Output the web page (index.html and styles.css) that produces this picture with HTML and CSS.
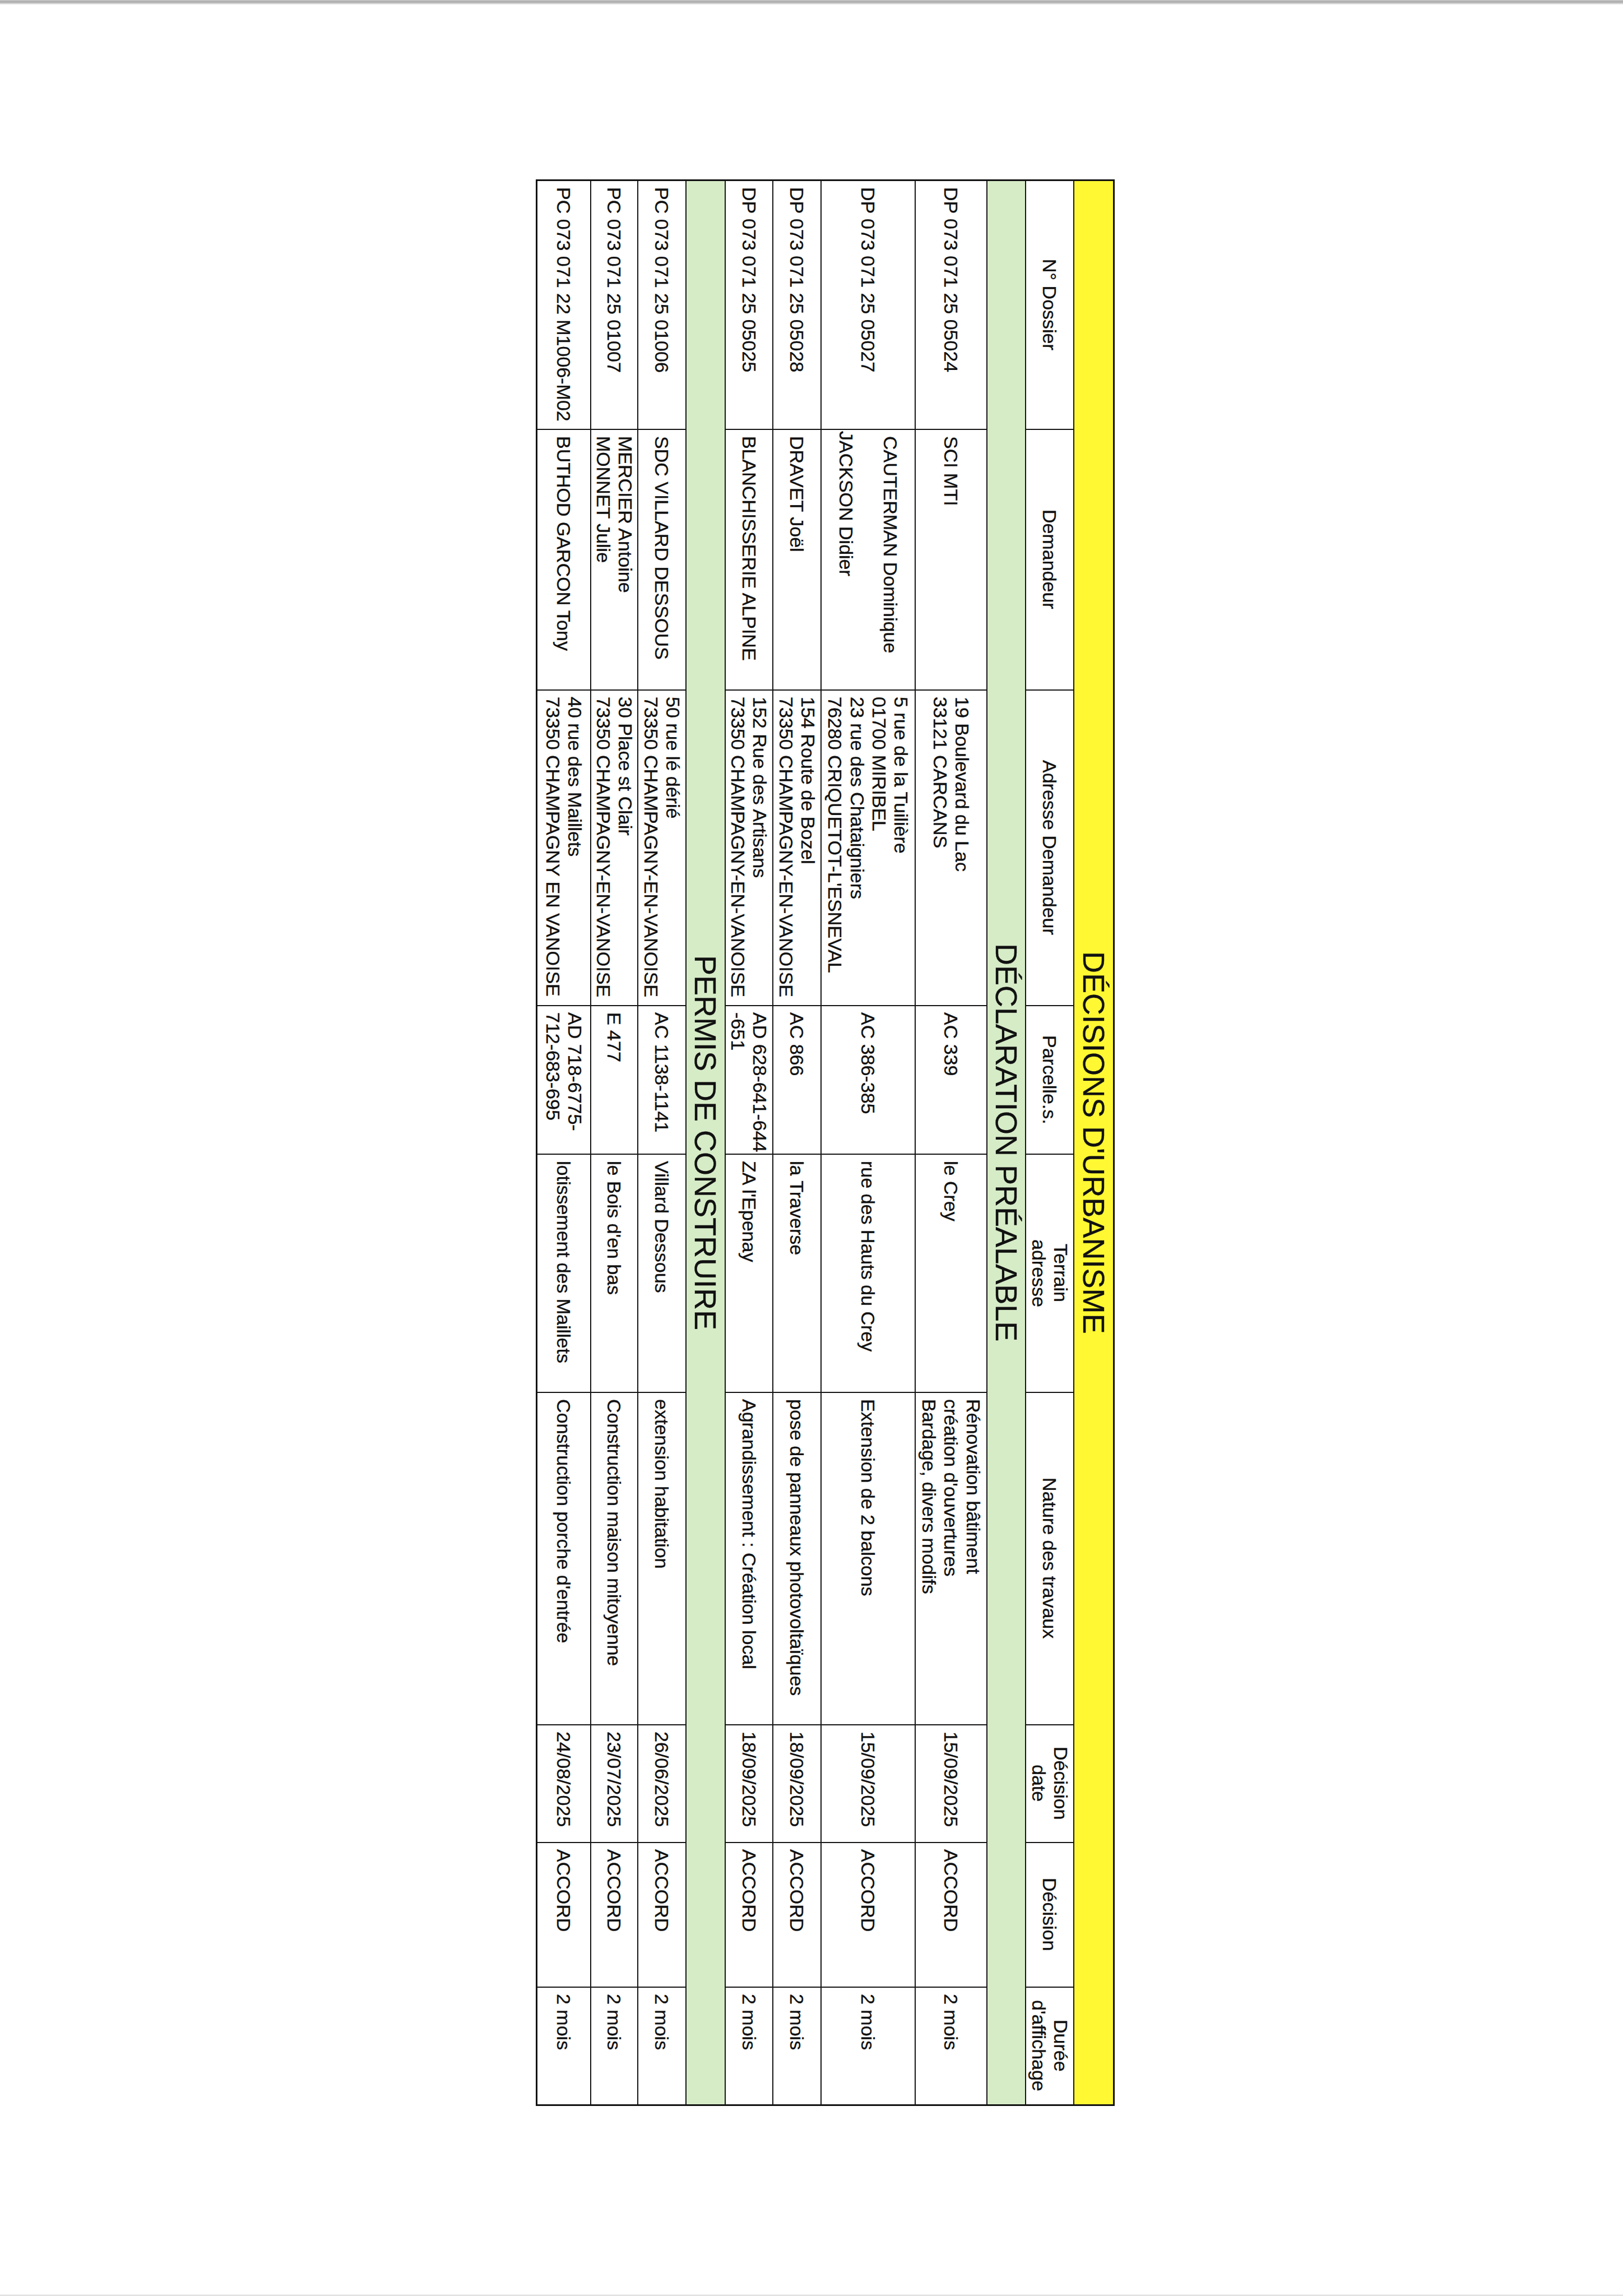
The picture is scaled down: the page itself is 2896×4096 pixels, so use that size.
FILE: index.html
```html
<!DOCTYPE html>
<html lang="fr">
<head>
<meta charset="utf-8">
<title>Décisions d'urbanisme</title>
<link rel="stylesheet" href="styles.css">
</head>
<body>
<div class="page">
  <div class="scan-top"></div>
  <div class="sheet">
    <table class="decisions">
      <colgroup>
        <col class="c-dossier">
        <col class="c-demandeur">
        <col class="c-adresse">
        <col class="c-parcelle">
        <col class="c-terrain">
        <col class="c-nature">
        <col class="c-date">
        <col class="c-decision">
        <col class="c-duree">
      </colgroup>
      <tbody>
        <tr class="r-title"><td colspan="9" class="title">DÉCISIONS D'URBANISME</td></tr>
        <tr class="r-head">
          <th>N° Dossier</th>
          <th>Demandeur</th>
          <th>Adresse Demandeur</th>
          <th>Parcelle.s.</th>
          <th>Terrain<br>adresse</th>
          <th>Nature des travaux</th>
          <th>Décision<br>date</th>
          <th>Décision</th>
          <th>Durée<br>d'affichage</th>
        </tr>
        <tr class="r-section"><td colspan="9" class="section">DÉCLARATION PRÉALABLE</td></tr>
        <tr class="r-1">
          <td>DP 073 071 25 05024</td>
          <td>SCI MTI</td>
          <td>19 Boulevard du Lac<br>33121 CARCANS</td>
          <td>AC 339</td>
          <td>le Crey</td>
          <td>Rénovation bâtiment<br>création d'ouvertures<br>Bardage, divers modifs</td>
          <td>15/09/2025</td>
          <td>ACCORD</td>
          <td>2 mois</td>
        </tr>
        <tr class="r-2">
          <td>DP 073 071 25 05027</td>
          <td>CAUTERMAN Dominique<br><br><span class="out">JACKSON Didier</span></td>
          <td>5 rue de la Tuilière<br>01700 MIRIBEL<br>23 rue des Chataigniers<br>76280 CRIQUETOT-L'ESNEVAL</td>
          <td>AC 386-385</td>
          <td>rue des Hauts du Crey</td>
          <td>Extension de 2 balcons</td>
          <td>15/09/2025</td>
          <td>ACCORD</td>
          <td>2 mois</td>
        </tr>
        <tr class="r-3">
          <td>DP 073 071 25 05028</td>
          <td>DRAVET Joël</td>
          <td>154 Route de Bozel<br>73350 CHAMPAGNY-EN-VANOISE</td>
          <td>AC 866</td>
          <td>la Traverse</td>
          <td>pose de panneaux photovoltaïques</td>
          <td>18/09/2025</td>
          <td>ACCORD</td>
          <td>2 mois</td>
        </tr>
        <tr class="r-4">
          <td>DP 073 071 25 05025</td>
          <td>BLANCHISSERIE ALPINE</td>
          <td>152 Rue des Artisans<br>73350 CHAMPAGNY-EN-VANOISE</td>
          <td>AD 628-641-644<br>-651</td>
          <td>ZA l'Epenay</td>
          <td>Agrandissement : Création local</td>
          <td>18/09/2025</td>
          <td>ACCORD</td>
          <td>2 mois</td>
        </tr>
        <tr class="r-section2"><td colspan="9" class="section">PERMIS DE CONSTRUIRE</td></tr>
        <tr class="r-5">
          <td>PC 073 071 25 01006</td>
          <td>SDC VILLARD DESSOUS</td>
          <td>50 rue lé dérié<br>73350 CHAMPAGNY-EN-VANOISE</td>
          <td>AC 1138-1141</td>
          <td>Villard Dessous</td>
          <td>extension habitation</td>
          <td>26/06/2025</td>
          <td>ACCORD</td>
          <td>2 mois</td>
        </tr>
        <tr class="r-6">
          <td>PC 073 071 25 01007</td>
          <td>MERCIER Antoine<br>MONNET Julie</td>
          <td>30 Place st Clair<br>73350 CHAMPAGNY-EN-VANOISE</td>
          <td>E 477</td>
          <td>le Bois d'en bas</td>
          <td>Construction maison mitoyenne</td>
          <td>23/07/2025</td>
          <td>ACCORD</td>
          <td>2 mois</td>
        </tr>
        <tr class="r-7">
          <td>PC 073 071 22 M1006-M02</td>
          <td>BUTHOD GARCON Tony</td>
          <td>40 rue des Maillets<br>73350 CHAMPAGNY EN VANOISE</td>
          <td>AD 718-6775-<br>712-683-695</td>
          <td>lotissement des Maillets</td>
          <td>Construction porche d'entrée</td>
          <td>24/08/2025</td>
          <td>ACCORD</td>
          <td>2 mois</td>
        </tr>
      </tbody>
    </table>
  </div>
  <div class="scan-bottom"></div>
</div>
</body>
</html>
```

FILE: styles.css
```css
html, body {
  margin: 0;
  padding: 0;
  background: #ffffff;
}

body {
  font-family: "Liberation Sans", Arial, sans-serif;
  color: #111111;
}

.page {
  width: 2896px;
  height: 4096px;
  display: flex;
  flex-direction: column;
  overflow: hidden;
}

.scan-top {
  flex: 0 0 8px;
  background: linear-gradient(to bottom, #c9c9c9 0%, #a9a9a9 45%, #cfcfcf 75%, #efefef 100%);
}

.scan-bottom {
  flex: 0 0 3px;
  margin-top: auto;
  background: linear-gradient(to bottom, #f2f2f2, #dadada);
}

.sheet {
  padding-top: 312px;
  padding-left: 956px;
}

.decisions {
  writing-mode: vertical-rl;
  border-collapse: collapse;
  table-layout: fixed;
  inline-size: 3434px;
  border: 3px solid #111111;
  font-size: 34px;
  line-height: 1.16;
  -webkit-text-stroke: 0.35px #111111;
}

.c-dossier { inline-size: 444px; }
.c-demandeur { inline-size: 465px; }
.c-adresse { inline-size: 563px; }
.c-parcelle { inline-size: 265px; }
.c-terrain { inline-size: 425px; }
.c-nature { inline-size: 593px; }
.c-date { inline-size: 210px; }
.c-decision { inline-size: 258px; }
.c-duree { inline-size: 211px; }

.decisions td,
.decisions th {
  border: 2px solid #151515;
  padding-block: 0;
  padding-inline: 11px 2px;
  vertical-align: middle;
  text-align: start;
  white-space: nowrap;
  font-weight: normal;
  overflow: visible;
}

.decisions th {
  text-align: center;
  padding-inline: 2px;
}

.decisions td.title {
  background: #fff833;
  text-align: center;
  font-size: 54px;
  line-height: 1.1;
  padding: 0;
}

.decisions td.section {
  background: #d6ecc7;
  text-align: center;
  font-size: 54px;
  line-height: 1.1;
  padding: 0;
}

.r-title { block-size: 72px; }
.r-head { block-size: 86px; }
.r-section { block-size: 69px; }
.r-1 { block-size: 128px; }
.r-2 { block-size: 168px; }
.r-3 { block-size: 86px; }
.r-4 { block-size: 85px; }
.r-section2 { block-size: 70px; }
.r-5 { block-size: 86px; }
.r-6 { block-size: 84px; }
.r-7 { block-size: 96px; }

.out {
  margin-inline-start: -9px;
}
```
